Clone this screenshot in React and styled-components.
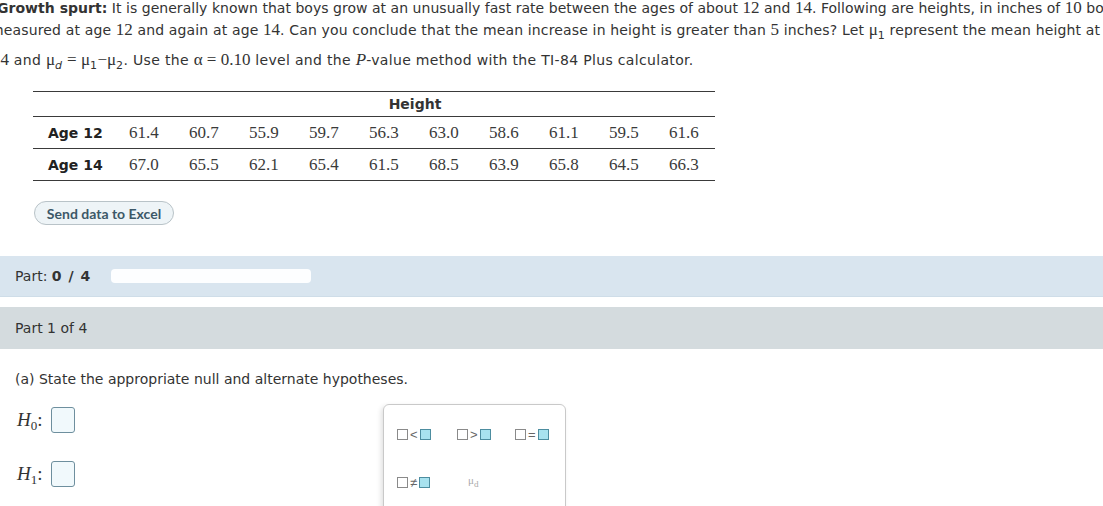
import React from 'react';
import styled, { createGlobalStyle } from 'styled-components';

const GlobalStyle = createGlobalStyle`
  body {
    margin: 0;
    background: #fff;
    font-family: "DejaVu Sans", Verdana, sans-serif;
    color: #333;
  }
`;

const Page = styled.div`
  width: 1103px;
  height: 506px;
  overflow: hidden;
  position: relative;
`;

const Intro = styled.div`
  margin-top: -3px;
  font-size: 14px;
  white-space: nowrap;
`;

const Line = styled.div`
  height: 22px;
  line-height: 22px;
  letter-spacing: ${({ $ls }) => $ls}px;
  margin-left: ${({ $x }) => $x}px;
  margin-top: ${({ $top }) => $top || 0}px;
`;

const Num = styled.span`
  font-family: "Liberation Serif", "Times New Roman", serif;
  font-size: 17px;
  letter-spacing: 0;
`;

const Sub = styled.sub`
  font-size: ${({ $size }) => $size || 11}px;
  vertical-align: -4px;
  line-height: 0;
`;

const Table = styled.table`
  margin: 20px 0 0 33px;
  width: 682px;
  border-collapse: collapse;
  border-top: 1px solid #3a3a3a;
  td,
  th {
    border-bottom: 1px solid #3a3a3a;
    padding: 0 0 0 14px;
    text-align: left;
  }
`;

const HeadCell = styled.th`
  height: 24px;
  font-size: 14px;
  font-weight: bold;
  text-align: center !important;
  padding: 0 !important;
  vertical-align: middle;
`;

const LabelCell = styled.td`
  width: 67px;
  height: 31px;
  font-size: 14px;
  font-weight: bold;
  padding-left: 15px !important;
  color: #222;
`;

const DataCell = styled.td`
  width: 46px;
  font-family: "Liberation Serif", "Times New Roman", serif;
  font-size: 17px;
  color: #3a3a3a;
`;

const ExcelButton = styled.button`
  display: block;
  margin: 20px 0 0 34px;
  width: 140px;
  height: 24px;
  border-radius: 12px;
  border: 1px solid #b9c3c8;
  background: #eef4f7;
  color: #3c5868;
  font-family: Lato, "Open Sans", sans-serif;
  font-weight: 700;
  font-size: 14px;
  padding: 0;
`;

const Band = styled.div`
  display: flex;
  align-items: center;
  gap: 20px;
  height: ${({ $h }) => $h}px;
  margin-top: ${({ $top }) => $top}px;
  padding-left: 15px;
  background: ${({ $bg }) => $bg};
  border-bottom: 1px solid ${({ $line }) => $line};
  font-size: 14px;
  b {
    letter-spacing: 1px;
  }
`;

const Progress = styled.div`
  width: 200px;
  height: 14px;
  border-radius: 4px;
  background: #fdfeff;
`;

const Question = styled.div`
  margin: 20px 0 0 15px;
  font-size: 14px;
  line-height: 20px;
`;

const Work = styled.div`
  display: flex;
  align-items: flex-start;
  margin-top: 15px;
`;

const Hypotheses = styled.div`
  display: flex;
  flex-direction: column;
  gap: 28px;
  width: 366px;
  padding: 3px 0 0 17px;
`;

const HypRow = styled.div`
  display: flex;
  align-items: center;
  height: 26px;
`;

const HypLabel = styled.span`
  width: 34px;
  font-family: "Liberation Serif", "Times New Roman", serif;
  font-size: 19px;
  color: #333;
  i {
    font-style: italic;
  }
`;

const AnswerBox = styled.div`
  width: 22px;
  height: 24px;
  border: 1px solid #6e8f9e;
  border-radius: 3px;
  background: #f1f9fc;
`;

const Palette = styled.div`
  width: 168px;
  height: 120px;
  padding: 5px 0 0 13px;
  border: 1px solid #c9c9c9;
  border-radius: 6px;
  box-shadow: -2px 2px 5px rgba(0, 0, 0, 0.12);
  display: grid;
  grid-template-columns: 60px 58px 50px;
  grid-auto-rows: 48px;
  align-items: center;
`;

const Sym = styled.span`
  display: flex;
  align-items: center;
  gap: 2px;
  font-family: "Liberation Sans", Arial, sans-serif;
  font-size: 13px;
  color: #666;
`;

const Slot = styled.span`
  display: inline-block;
  width: 9px;
  height: 9px;
  border: 1px solid ${({ $filled }) => ($filled ? '#4d8da0' : '#8a8a8a')};
  background: ${({ $filled }) => ($filled ? '#a8e2ef' : '#fff')};
`;

const Mu = styled.span`
  padding-left: 11px;
  font-family: "Liberation Serif", serif;
  font-size: 11px;
  color: #aaa;
`;

const heights = [
  ['Age 12', ['61.4', '60.7', '55.9', '59.7', '56.3', '63.0', '58.6', '61.1', '59.5', '61.6']],
  ['Age 14', ['67.0', '65.5', '62.1', '65.4', '61.5', '68.5', '63.9', '65.8', '64.5', '66.3']],
];

const Template = ({ op }) => (
  <Sym>
    <Slot />
    {op}
    <Slot $filled />
  </Sym>
);

const App = () => (
  <Page>
    <GlobalStyle />
    <Intro>
      <Line $x={-3} $ls={0.03}>
        <b>Growth spurt:</b> It is generally known that boys grow at an unusually fast rate between the
        ages of about <Num>12</Num> and <Num>14</Num>. Following are heights, in inches of <Num>10</Num> boys
      </Line>
      <Line $x={-10} $ls={0.15}>
        measured at age <Num>12</Num> and again at age <Num>14</Num>. Can you conclude that the mean
        increase in height is greater than <Num>5</Num> inches? Let <Num>μ</Num>
        <Sub>1</Sub> represent the mean height at age
      </Line>
      <Line $x={-8} $top={8} $ls={0.33}>
        <Num>14</Num> and <Num>μ</Num>
        <Sub>
          <i>d</i>
        </Sub>{' '}
        <Num>= μ</Num>
        <Sub>1</Sub>
        <Num>−μ</Num>
        <Sub>2</Sub>. Use the <Num>α = 0.10</Num> level and the <Num><i>P</i></Num>-value method with the
        TI-84 Plus calculator.
      </Line>
    </Intro>

    <Table>
      <tbody>
        <tr>
          <th />
          <HeadCell colSpan={10}>Height</HeadCell>
        </tr>
        {heights.map(([label, values]) => (
          <tr key={label}>
            <LabelCell>{label}</LabelCell>
            {values.map((v, i) => (
              <DataCell key={i}>{v}</DataCell>
            ))}
          </tr>
        ))}
      </tbody>
    </Table>

    <ExcelButton>Send data to Excel</ExcelButton>

    <Band $h={40} $top={31} $bg="#d9e5ef" $line="#cfdde8">
      <span>
        Part: <b>0 / 4</b>
      </span>
      <Progress />
    </Band>
    <Band $h={41} $top={10} $bg="#d4dbde" $line="#d4dbde">
      Part 1 of 4
    </Band>

    <Question>(a) State the appropriate null and alternate hypotheses.</Question>

    <Work>
      <Hypotheses>
        <HypRow>
          <HypLabel>
            <i>H</i>
            <Sub $size={13}>0</Sub>:
          </HypLabel>
          <AnswerBox />
        </HypRow>
        <HypRow>
          <HypLabel>
            <i>H</i>
            <Sub $size={13}>1</Sub>:
          </HypLabel>
          <AnswerBox />
        </HypRow>
      </Hypotheses>
      <Palette>
        <Template op="<" />
        <Template op=">" />
        <Template op="=" />
        <Template op="≠" />
        <Mu>
          μ<sub>d</sub>
        </Mu>
      </Palette>
    </Work>
  </Page>
);

export default App;
